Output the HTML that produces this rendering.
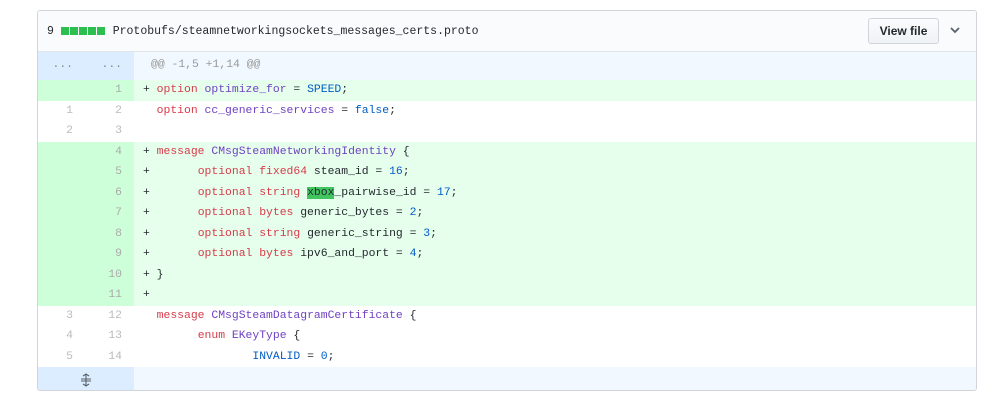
<!DOCTYPE html>
<html><head><meta charset="utf-8"><style>
body{margin:0;background:#fff;width:1000px;height:404px;overflow:hidden;font-family:"Liberation Mono",monospace;}
.box{position:absolute;left:37px;top:10px;width:938px;height:379px;border:1px solid #d1d5da;border-radius:3px;overflow:hidden;}
.hdr{height:40px;background:#fafbfc;border-bottom:1px solid #e1e4e8;position:relative;font-size:11.5px;color:#24292e;}
.hdr .t{position:absolute;left:9px;top:14px;white-space:pre}
.bars{display:inline-block;vertical-align:-1px}
.bars i{display:inline-block;width:8px;height:8px;background:#2cbe4e;margin-right:1px}
.btn{position:absolute;left:830px;top:7px;width:69px;height:24px;border:1px solid #d1d5da;border-radius:3px;background:linear-gradient(#fafbfc,#eff3f6);font:bold 12px "Liberation Sans",sans-serif;color:#24292e;text-align:center;line-height:24px}
.chev{position:absolute;left:911px;top:13px}
.row{display:flex;height:20.5px;line-height:20.5px;font-size:11.4px;}
.n{width:48px;text-align:right;padding-right:13px;box-sizing:border-box;color:#bbb;}
.n2{width:48px;text-align:right;padding-right:12px;box-sizing:border-box;color:#bbb;}
.c{flex:1;white-space:pre;color:#24292e;padding-left:9px}
.add .n,.add .n2{background:#cdffd8;color:#aaa}
.add .c{background:#e6ffed}
.hunk{height:28px;line-height:27px}
.hunk .n,.hunk .n2{background:#dbedff;color:#888}
.hunk .c{background:#f1f8ff;color:#999;padding-left:17px}
.k{color:#d73a49}.p{color:#6f42c1}.b{color:#005cc5}
.hl{background:#3fc65f}
.exp{height:25px;display:flex}
.exp .g{width:96px;background:#dbedff;text-align:center;color:#586069}
.exp .c{background:#f1f8ff}
</style></head><body>
<div class="box">
<div class="hdr"><div class="t">9 <span class="bars"><i></i><i></i><i></i><i></i><i></i></span> Protobufs/steamnetworkingsockets_messages_certs.proto</div>
<div class="btn">View file</div>
<svg class="chev" width="12" height="12" viewBox="0 0 12 12"><path d="M2 4l4 4 4-4" stroke="#586069" stroke-width="1.8" fill="none"/></svg>
</div>
<div class="row hunk"><div class="n">...</div><div class="n2">...</div><div class="c">@@ -1,5 +1,14 @@</div></div>
<div class="row add"><div class="n"></div><div class="n2">1</div><div class="c">+ <span class="k">option</span> <span class="p">optimize_for</span> = <span class="b">SPEED</span>;</div></div>
<div class="row"><div class="n">1</div><div class="n2">2</div><div class="c">  <span class="k">option</span> <span class="p">cc_generic_services</span> = <span class="b">false</span>;</div></div>
<div class="row"><div class="n">2</div><div class="n2">3</div><div class="c"> </div></div>
<div class="row add"><div class="n"></div><div class="n2">4</div><div class="c">+ <span class="k">message</span> <span class="p">CMsgSteamNetworkingIdentity</span> {</div></div>
<div class="row add"><div class="n"></div><div class="n2">5</div><div class="c">+       <span class="k">optional fixed64</span> steam_id = <span class="b">16</span>;</div></div>
<div class="row add"><div class="n"></div><div class="n2">6</div><div class="c">+       <span class="k">optional string</span> <span class="hl">xbox</span>_pairwise_id = <span class="b">17</span>;</div></div>
<div class="row add"><div class="n"></div><div class="n2">7</div><div class="c">+       <span class="k">optional bytes</span> generic_bytes = <span class="b">2</span>;</div></div>
<div class="row add"><div class="n"></div><div class="n2">8</div><div class="c">+       <span class="k">optional string</span> generic_string = <span class="b">3</span>;</div></div>
<div class="row add"><div class="n"></div><div class="n2">9</div><div class="c">+       <span class="k">optional bytes</span> ipv6_and_port = <span class="b">4</span>;</div></div>
<div class="row add"><div class="n"></div><div class="n2">10</div><div class="c">+ }</div></div>
<div class="row add"><div class="n"></div><div class="n2">11</div><div class="c">+</div></div>
<div class="row"><div class="n">3</div><div class="n2">12</div><div class="c">  <span class="k">message</span> <span class="p">CMsgSteamDatagramCertificate</span> {</div></div>
<div class="row"><div class="n">4</div><div class="n2">13</div><div class="c">        <span class="k">enum</span> <span class="p">EKeyType</span> {</div></div>
<div class="row"><div class="n">5</div><div class="n2">14</div><div class="c">                <span class="b">INVALID</span> = <span class="b">0</span>;</div></div>
<div class="exp"><div class="g"><svg width="14" height="14" viewBox="0 0 14 14" style="margin-top:6px"><path d="M7 1v12M4 3l3-2 3 2M4 11l3 2 3-2M2 6h10M2 8h10" stroke="#586069" stroke-width="1.1" fill="none"/></svg></div><div class="c"></div></div>
</div>
</body></html>
